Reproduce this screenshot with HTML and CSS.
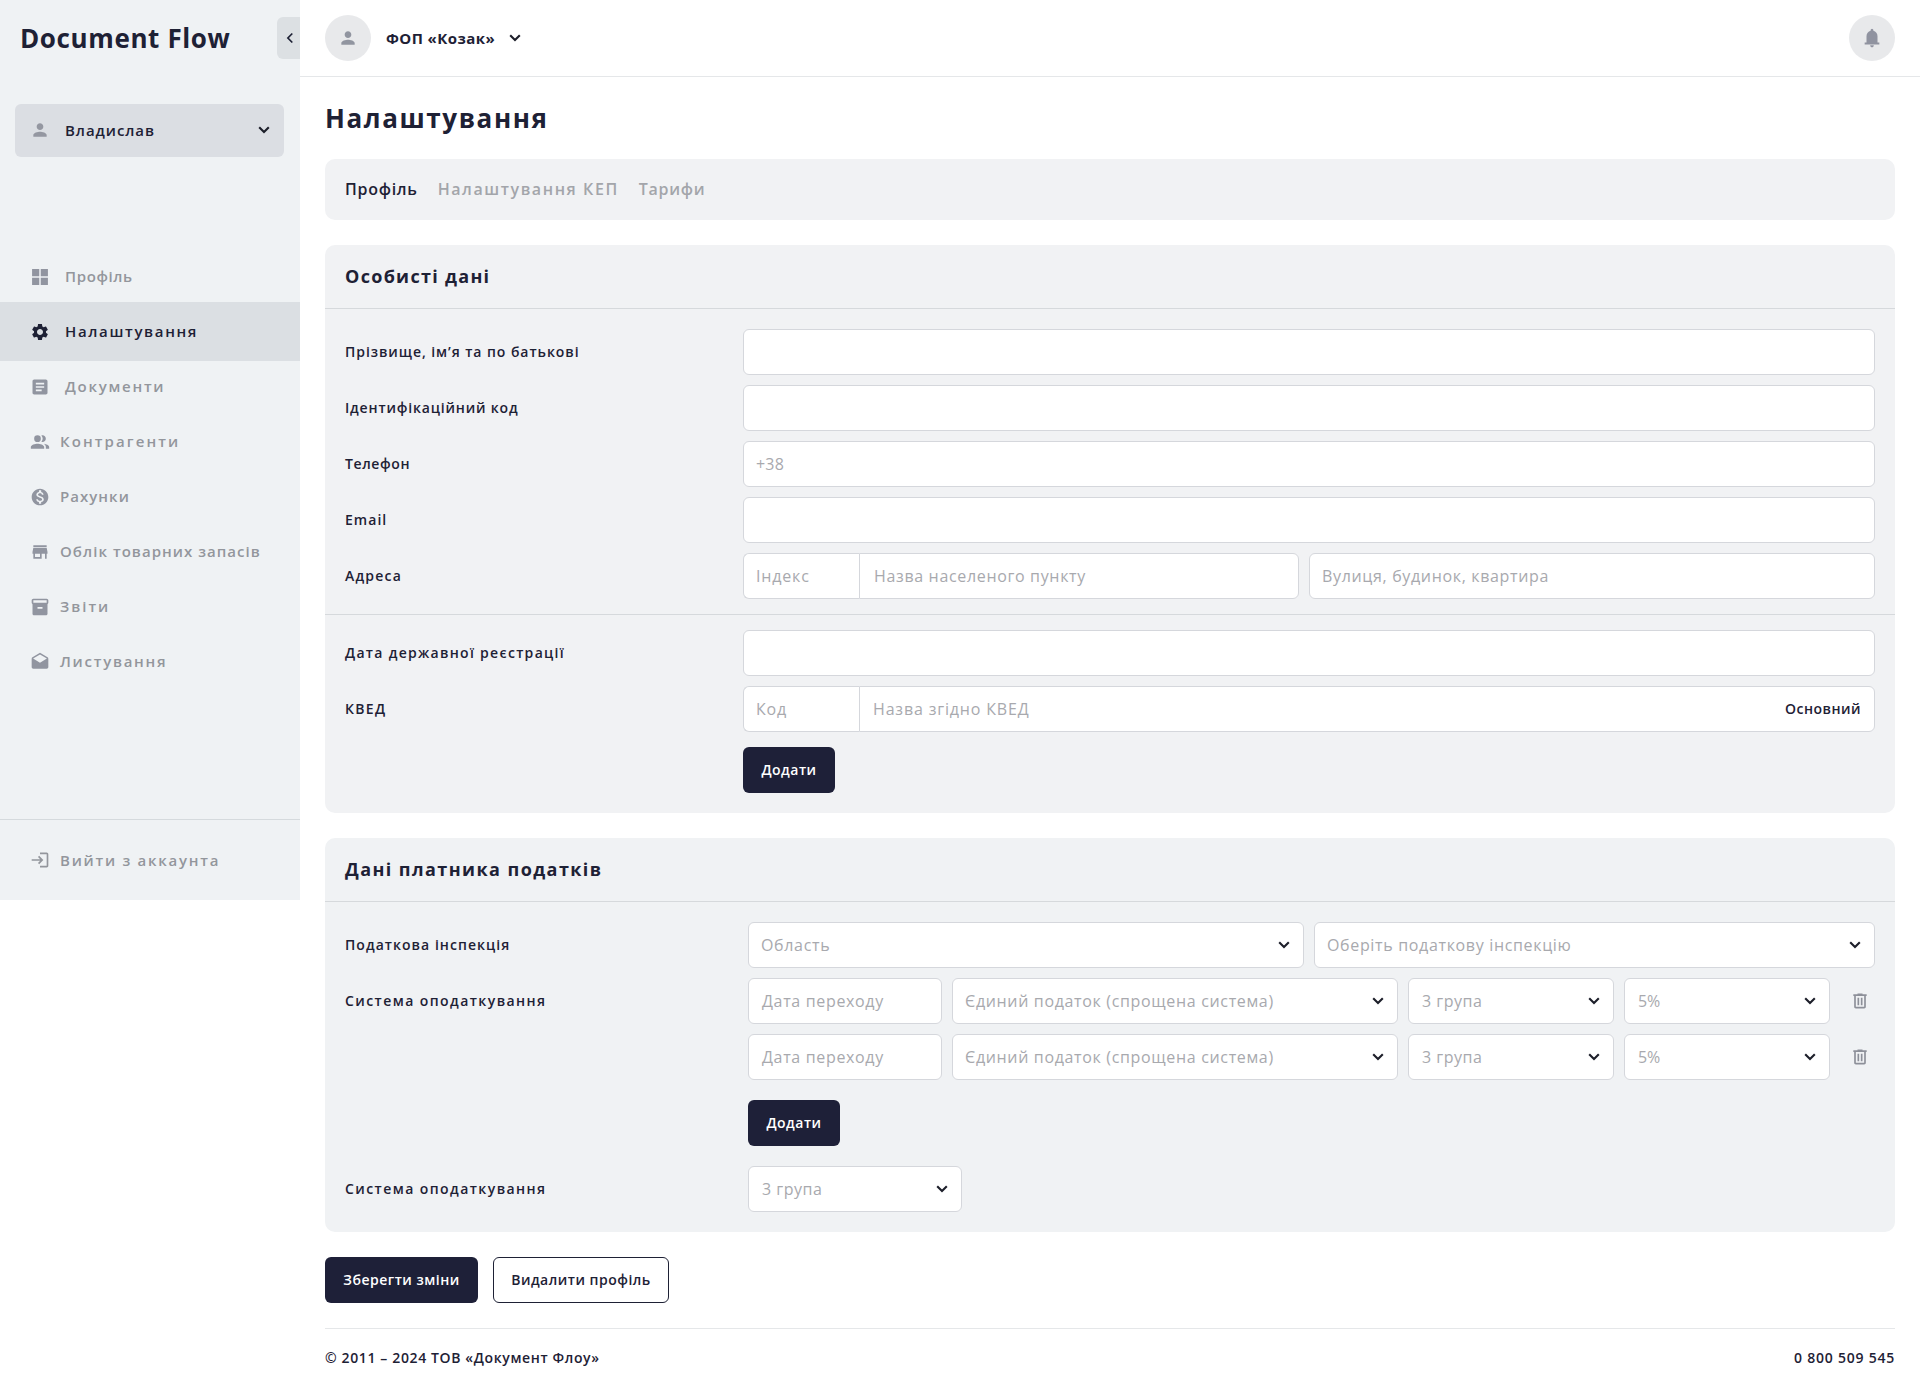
FILE: index.html
```html
<!DOCTYPE html>
<html lang="uk">
<head>
<meta charset="utf-8">
<title>Document Flow — Налаштування</title>
<link rel="stylesheet" href="styles.css">
</head>
<body>
<svg class="sprite" aria-hidden="true">
  <symbol id="chev" viewBox="0 0 12 8"><path d="M1.2 1.3 6 6.1l4.8-4.8" fill="none" stroke="currentColor" stroke-width="2.1"/></symbol>
  <symbol id="person" viewBox="0 0 24 24"><path d="M12 12c2.21 0 4-1.79 4-4s-1.790-4-4-4-4 1.790-4 4 1.790 4 4 4zm0 2c-2.670 0-8 1.340-8 4v2h16v-2c0-2.660-5.330-4-8-4z"/></symbol>
  <symbol id="trash" viewBox="0 0 24 24"><path d="M7 21q-.825 0-1.412-.587Q5 19.825 5 19V6H4V4h5V3h6v1h5v2h-1v13q0 .825-.587 1.413Q17.825 21 17 21zM17 6H7v13h10zM9 17h2V8H9zm4 0h2V8h-2z"/></symbol>
</svg>
<div class="app">
  <aside class="sidebar">
    <div class="brand">
      <span class="brand-name">Document Flow</span>
      <button class="collapse"><svg width="8" height="12" viewBox="0 0 8 12"><path d="M6.300 1.500 1.900 6l4.400 4.500" fill="none" stroke="currentColor" stroke-width="1.700"/></svg></button>
    </div>
    <div class="user">
      <svg class="ico"><use href="#person"/></svg>
      <span class="ls9">Владислав</span>
      <svg class="chev"><use href="#chev"/></svg>
    </div>
    <nav class="nav">
      <a class="wide"><svg class="ico" viewBox="0 0 24 24"><path d="M2.500 2.500h8.600v8.600H2.500zM12.900 2.500h8.600v8.600h-8.600zM2.500 12.900h8.600v8.600H2.500zM12.900 12.900h8.600v8.600h-8.600z"/></svg><span class="ls6">Профіль</span></a>
      <a class="wide active"><svg class="ico" viewBox="0 0 24 24"><path d="M19.140 12.940c.040-.300.060-.610.060-.940 0-.320-.020-.640-.070-.940l2.030-1.580c.180-.140.230-.410.120-.610l-1.920-3.320c-.120-.220-.370-.290-.590-.220l-2.390.960c-.500-.380-1.030-.700-1.620-.940l-.360-2.540c-.040-.240-.240-.410-.480-.410h-3.840c-.240 0-.430.170-.470.410l-.360 2.540c-.590.240-1.130.570-1.620.940l-2.390-.960c-.220-.080-.470 0-.590.220L2.740 8.870c-.120.210-.080.470.120.610l2.030 1.580c-.050.300-.090.630-.090.940s.020.640.070.940l-2.030 1.580c-.180.140-.230.410-.120.610l1.920 3.320c.120.220.370.290.590.220l2.390-.960c.500.380 1.030.700 1.620.940l.360 2.540c.050.240.240.410.480.410h3.840c.240 0 .440-.170.470-.410l.360-2.540c.590-.240 1.130-.560 1.620-.940l2.390.960c.220.080.470 0 .590-.220l1.920-3.320c.120-.220.070-.470-.120-.610l-2.010-1.580zM12 15.600c-1.980 0-3.600-1.620-3.600-3.600s1.620-3.600 3.600-3.600 3.600 1.620 3.600 3.600-1.620 3.600-3.600 3.600z"/></svg><span class="ls16">Налаштування</span></a>
      <a class="wide"><svg class="ico" viewBox="0 0 24 24"><path d="M19 3H5c-1.100 0-2 .900-2 2v14c0 1.100.900 2 2 2h14c1.100 0 2-.900 2-2V5c0-1.100-.900-2-2-2zm-5 14H7v-2h7v2zm3-4H7v-2h10v2zm0-4H7V7h10v2z"/></svg><span class="ls17">Документи</span></a>
      <a><svg class="ico" viewBox="0 0 24 24"><path d="M9 12a4 4 0 1 0 0-8 4 4 0 0 0 0 8zm0 2c-2.670 0-8 1.340-8 4v2h16v-2c0-2.660-5.330-4-8-4zm6-2c2.210 0 4-1.790 4-4s-1.790-4-4-4c-.470 0-.910.100-1.330.240a5.980 5.980 0 0 1 0 7.520c.420.140.860.240 1.330.240zm1.670 2.130C18.040 15.060 19 16.320 19 18v2h4v-2c0-2.180-3.580-3.470-6.330-3.870z"/></svg><span class="ls20">Контрагенти</span></a>
      <a><svg class="ico" viewBox="0 0 24 24"><path d="M12 2C6.480 2 2 6.480 2 12s4.480 10 10 10 10-4.480 10-10S17.520 2 12 2zm1.410 16.090V20h-2.670v-1.930c-1.710-.360-3.160-1.460-3.270-3.400h1.960c.100 1.050.820 1.870 2.650 1.870 1.960 0 2.400-.980 2.400-1.590 0-.830-.440-1.610-2.670-2.140-2.480-.600-4.180-1.620-4.180-3.670 0-1.720 1.390-2.840 3.110-3.210V4h2.670v1.950c1.860.450 2.790 1.860 2.850 3.390H14.300c-.050-1.110-.640-1.870-2.220-1.870-1.500 0-2.400.680-2.400 1.640 0 .840.650 1.390 2.670 1.910s4.180 1.390 4.180 3.910c-.010 1.830-1.380 2.830-3.120 3.160z"/></svg><span class="ls10">Рахунки</span></a>
      <a><svg class="ico" viewBox="0 0 24 24"><path d="M20 4H4v2h16V4zm1 10v-2l-1-5H4l-1 5v2h1v6h10v-6h4v6h2v-6h1zm-9 4H6v-4h6v4z"/></svg><span class="ls10">Облік товарних запасів</span></a>
      <a><svg class="ico" viewBox="0 0 24 24"><path d="M20 2H4c-1 0-2 .900-2 2v3.010c0 .720.430 1.340 1 1.690V20c0 1.100 1.100 2 2 2h14c.900 0 2-.900 2-2V8.700c.570-.350 1-.970 1-1.690V4c0-1.100-1-2-2-2zm-5 12H9v-2h6v2zm5-7H4V4h16v3z"/></svg><span class="ls19">Звіти</span></a>
      <a><svg class="ico" viewBox="0 0 24 24"><path d="M21.990 8c0-.720-.370-1.350-.940-1.700L12 1 2.950 6.300C2.380 6.650 2 7.280 2 8v10c0 1.100.900 2 2 2h16c1.100 0 2-.900 2-2l-.010-10zM12 13 3.740 7.840 12 3l8.260 4.840L12 13z"/></svg><span class="ls17">Листування</span></a>
    </nav>
    <div class="logout">
      <svg class="ico" viewBox="0 0 24 24"><path d="M11 7 9.600 8.400l2.600 2.600H2v2h10.200l-2.600 2.600L11 17l5-5zM20 19h-8v2h8c1.100 0 2-.900 2-2V5c0-1.100-.900-2-2-2h-8v2h8z"/></svg>
      <span class="ls17">Вийти з аккаунта</span>
    </div>
  </aside>

  <div class="page">
    <header class="topbar">
      <div class="account">
        <span class="round"><svg class="ico"><use href="#person"/></svg></span>
        <span class="account-name">ФОП «Козак»</span>
        <svg class="chev"><use href="#chev"/></svg>
      </div>
      <span class="round"><svg class="bell" viewBox="0 0 24 24"><path d="M4 19v-2h2v-7q0-2.075 1.250-3.687T10.500 4.200v-.7q0-.625.438-1.062T12 2t1.063.438T13.500 3.500v.7q2 .5 3.250 2.113T18 10v7h2v2zm8 3q-.825 0-1.412-.587T10 20h4q0 .825-.587 1.413T12 22z"/></svg></span>
    </header>

    <main class="main">
      <h1>Налаштування</h1>
      <div class="tabs">
        <a class="on ls7">Профіль</a><a class="ls15">Налаштування КЕП</a><a class="ls7">Тарифи</a>
      </div>

      <section class="card">
        <h2 class="ls13">Особисті дані</h2>
        <div class="rows first">
          <div class="row"><label class="ls9">Прізвище, ім’я та по батькові</label><div class="field"></div></div>
          <div class="row"><label class="ls8">Ідентифікаційний код</label><div class="field"></div></div>
          <div class="row"><label class="ls6">Телефон</label><div class="field"><span class="ls2">+38</span></div></div>
          <div class="row"><label class="ls10">Email</label><div class="field"></div></div>
          <div class="row"><label class="ls12">Адреса</label>
            <div class="address">
              <div class="joined"><div class="field code"><span class="ls8">Індекс</span></div><div class="field"><span class="shift">Назва населеного пункту</span></div></div>
              <div class="field"><span>Вулиця, будинок, квартира</span></div>
            </div>
          </div>
        </div>
        <div class="rows second">
          <div class="row"><label class="ls13">Дата державної реєстрації</label><div class="field"></div></div>
          <div class="row"><label class="ls13">КВЕД</label>
            <div class="joined"><div class="field code"><span class="ls8">Код</span></div><div class="field"><span class="ls8">Назва згідно КВЕД</span><b>Основний</b></div></div>
          </div>
          <div class="row"><button class="btn add">Додати</button></div>
        </div>
      </section>

      <section class="card tax">
        <h2 class="ls14">Дані платника податків</h2>
        <div class="rows">
          <div class="row"><label class="ls10">Податкова інспекція</label>
            <div class="inspection">
              <div class="field"><span>Область</span><svg class="chev"><use href="#chev"/></svg></div>
              <div class="field"><span>Оберіть податкову інспекцію</span><svg class="chev"><use href="#chev"/></svg></div>
            </div>
          </div>
          <div class="row"><label class="ls14">Система оподаткування</label>
            <div class="system">
              <div class="field"><span class="shift">Дата переходу</span></div>
              <div class="field"><span>Єдиний податок (спрощена система)</span><svg class="chev"><use href="#chev"/></svg></div>
              <div class="field"><span class="ls5 shift">3 група</span><svg class="chev"><use href="#chev"/></svg></div>
              <div class="field"><span class="ls0 shift">5%</span><svg class="chev"><use href="#chev"/></svg></div>
              <svg class="ico trash"><use href="#trash"/></svg>
            </div>
          </div>
          <div class="row">
            <div class="system">
              <div class="field"><span class="shift">Дата переходу</span></div>
              <div class="field"><span>Єдиний податок (спрощена система)</span><svg class="chev"><use href="#chev"/></svg></div>
              <div class="field"><span class="ls5 shift">3 група</span><svg class="chev"><use href="#chev"/></svg></div>
              <div class="field"><span class="ls0 shift">5%</span><svg class="chev"><use href="#chev"/></svg></div>
              <svg class="ico trash"><use href="#trash"/></svg>
            </div>
          </div>
          <div class="row spaced"><button class="btn add">Додати</button></div>
          <div class="row"><label class="ls14">Система оподаткування</label><div class="field group"><span class="ls5 shift">3 група</span><svg class="chev"><use href="#chev"/></svg></div></div>
        </div>
      </section>

      <div class="actions"><button class="btn save">Зберегти зміни</button><button class="btn outline">Видалити профіль</button></div>
      <footer class="footer"><span>© 2011 – 2024 ТОВ «Документ Флоу»</span><span class="phone">0 800 509 545</span></footer>
    </main>
  </div>
</div>
</body>
</html>
```
FILE: styles.css
```css
* { box-sizing: border-box; }
body {
  margin: 0;
  background: #fff;
  color: #1e2135;
  font: 600 14px/20px "Open Sans", "Noto Sans", sans-serif;
}
.sprite { display: none; }
.app { display: flex; align-items: flex-start; }
.ico { width: 20px; height: 20px; fill: currentColor; flex: none; }
.chev { width: 12px; height: 8px; color: #1d1f2a; flex: none; }

/* tracking steps, tenths of a pixel */
.ls0 { letter-spacing: -.2px !important; }
.ls2 { letter-spacing: .2px !important; }
.ls5 { letter-spacing: .5px !important; }
.ls6 { letter-spacing: .62px !important; }
.ls7 { letter-spacing: .72px !important; }
.ls8 { letter-spacing: .83px !important; }
.ls9 { letter-spacing: .94px !important; }
.ls10 { letter-spacing: 1.04px !important; }
.ls12 { letter-spacing: 1.2px !important; }
.ls13 { letter-spacing: 1.3px !important; }
.ls14 { letter-spacing: 1.43px !important; }
.ls15 { letter-spacing: 1.58px !important; }
.ls16 { letter-spacing: 1.66px !important; }
.ls17 { letter-spacing: 1.74px !important; }
.ls19 { letter-spacing: 1.98px !important; }
.ls20 { letter-spacing: 2.1px !important; }

/* sidebar */
.sidebar { width: 300px; height: 900px; flex: none; background: #eff2f4; display: flex; flex-direction: column; }
.brand { height: 104px; padding: 17px 0 0 20px; display: flex; justify-content: space-between; align-items: flex-start; }
.brand-name { font-size: 26px; line-height: 42px; font-weight: 700; letter-spacing: .62px; }
.collapse { width: 23px; height: 42px; padding: 0 0 0 2px; border: 0; border-radius: 6px 0 0 6px; background: #dce0e3; color: #1e2135; display: flex; align-items: center; justify-content: center; }
.user { height: 53px; margin: 0 16px 0 15px; padding: 0 14px 1px 15px; border-radius: 6px; background: #dbdee3; display: flex; align-items: center; font-size: 15px; }
.user .ico { color: #9497a1; }
.user span { margin-left: 15px; flex: 1; }
.user span, .nav span, .logout span { padding-bottom: 1px; }
.nav { margin-top: 92px; font-size: 15px; color: #93969c; }
.nav a { height: 55px; padding-left: 30px; display: flex; align-items: center; gap: 10px; }
.nav a .ico { color: #9195a0; }
.nav a.wide { gap: 15px; }
.nav a.active { height: 59px; margin: -2px 0; background: #dbdfe3; color: #1e2135; }
.nav a.active .ico { color: #1e2135; }
.logout { margin-top: auto; height: 81px; padding-left: 30px; border-top: 1px solid #d5dadd; display: flex; align-items: center; gap: 10px; font-size: 15px; color: #93969c; }

/* top bar */
.page { flex: 1; }
.topbar { height: 77px; padding: 0 25px; border-bottom: 1px solid #e5e7e9; display: flex; align-items: center; justify-content: space-between; }
.account { display: flex; align-items: center; }
.account-name { margin: 0 14px 0 15px; padding-bottom: 1px; font-size: 15px; font-weight: 700; letter-spacing: .42px; }
.round { width: 46px; height: 46px; border-radius: 50%; background: #e8e9eb; color: #9195a0; display: flex; align-items: center; justify-content: center; }
.bell { width: 22px; height: 22px; fill: #9093a0; }

.main { padding: 0 25px; }
h1 { margin: 0; padding-top: 21px; height: 82px; font-size: 26px; line-height: 40px; font-weight: 700; letter-spacing: 1.6px; }
.tabs { height: 61px; padding: 0 20px 2px; border-radius: 10px; background: #f1f2f4; display: flex; align-items: center; gap: 20px; font-size: 16px; color: #a3a5aa; }
.tabs .on { color: #1e2135; }

/* form cards */
.card { margin-top: 25px; border-radius: 10px; background: #f1f2f4; }
.tax { background: #f0f2f4; }
h2 { margin: 0; height: 64px; padding-left: 20px; border-bottom: 1px solid #d6d9dc; font-size: 18px; line-height: 63px; font-weight: 700; }
.rows { padding: 20px; display: flex; flex-direction: column; gap: 10px; }
.rows.first { padding-bottom: 15px; }
.rows.second { padding-top: 15px; border-top: 1px solid #d6d9dc; }
.row { display: grid; grid-template-columns: 398px 1fr; align-items: center; }
.tax .row { grid-template-columns: 403px 1fr; }
.row > :only-child { grid-column: 2; }
.field { height: 46px; min-width: 0; padding: 0 13px 0 12px; border: 1px solid #d5d7dc; border-radius: 6px; background: #fff; display: flex; align-items: center; justify-content: space-between; font-size: 16px; font-weight: 400; color: #a8a9ae; letter-spacing: .66px; white-space: nowrap; }
.field > span { padding-bottom: 1px; }
.field .shift { padding-left: 1px; }
.field b { font-size: 14px; font-weight: 600; letter-spacing: .49px; color: #1e2135; }
.address { display: grid; grid-template-columns: 556px 1fr; gap: 10px; }
.joined { display: grid; grid-template-columns: 116px 1fr; }
.joined .field { border-radius: 0 6px 6px 0; }
.joined .field + .field { padding-left: 13px; }
.joined .code { border-radius: 6px 0 0 6px; border-right: 0; }
.inspection { display: grid; grid-template-columns: 556px 1fr; gap: 10px; }
.system { display: grid; grid-template-columns: 194px 446px 206px 206px 20px; column-gap: 10px; align-items: center; }
.trash { margin-left: 10px; color: #8d9099; }
.tax .group { width: 214px; }
.row.spaced { margin: 10px 0; }
.btn { height: 46px; padding: 0; border: 0; border-radius: 6px; background: #1e2038; color: #fff; font: inherit; letter-spacing: .5px; }
.add { width: 92px; }
.first + .second .add { margin-top: 5px; }

.actions { margin-top: 25px; display: flex; gap: 15px; }
.save { width: 153px; }
.outline { width: 176px; border: 1px solid #1e2135; background: #fff; color: #1e2135; }
.footer { margin-top: 25px; height: 60px; padding-bottom: 1px; border-top: 1px solid #e5e7e9; display: flex; align-items: center; justify-content: space-between; letter-spacing: .63px; }
.phone { letter-spacing: .77px; }
```
